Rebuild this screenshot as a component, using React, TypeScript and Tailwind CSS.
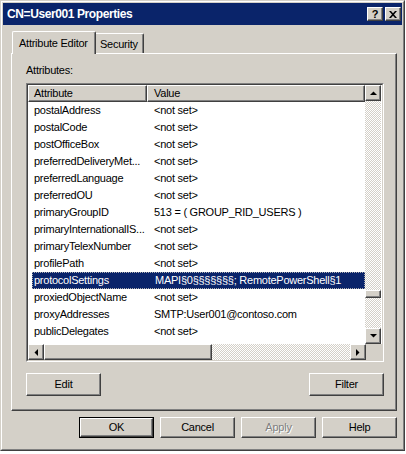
import React from "react";

const rows: [string, string][] = [
  ["postalAddress", "<not set>"],
  ["postalCode", "<not set>"],
  ["postOfficeBox", "<not set>"],
  ["preferredDeliveryMet...", "<not set>"],
  ["preferredLanguage", "<not set>"],
  ["preferredOU", "<not set>"],
  ["primaryGroupID", "513 = ( GROUP_RID_USERS )"],
  ["primaryInternationalIS...", "<not set>"],
  ["primaryTelexNumber", "<not set>"],
  ["profilePath", "<not set>"],
  ["protocolSettings", "MAPI§0§§§§§§§; RemotePowerShell§1"],
  ["proxiedObjectName", "<not set>"],
  ["proxyAddresses", "SMTP:User001@contoso.com"],
  ["publicDelegates", "<not set>"],
  ["pwdLastSet", "07/20/2011 1:39:44 W. Europe Daylight Time"],
];

const raised =
  "border border-t-white border-l-white border-r-[#404040] border-b-[#404040] shadow-[inset_-1px_-1px_#808080] bg-[#d4d0c8]";

function Arrow({ dir }: { dir: "up" | "down" | "left" | "right" }) {
  const pts = {
    up: "0,4 7,4 3.5,0.5",
    down: "0,0 7,0 3.5,3.5",
    left: "4,0 4,7 0.5,3.5",
    right: "0,0 0,7 3.5,3.5",
  }[dir];
  const vertical = dir === "up" || dir === "down";
  return (
    <svg width={vertical ? 7 : 4} height={vertical ? 4 : 7} viewBox={vertical ? "0 0 7 4" : "0 0 4 7"}>
      <polygon points={pts} fill="#000" />
    </svg>
  );
}

function Btn({ label, def, disabled }: { label: string; def?: boolean; disabled?: boolean }) {
  const inner = (
    <div className={`${raised} h-full w-full flex items-center justify-center`}>
      <span className={disabled ? "text-[#808080] [text-shadow:1px_1px_0_#fff]" : "text-black"}>{label}</span>
    </div>
  );
  if (def) {
    return <div className="w-[75px] h-[21px] border border-black">{inner}</div>;
  }
  return <div className="w-[75px] h-[21px]">{inner}</div>;
}

const dither =
  "bg-[image:repeating-conic-gradient(#d4d0c8_0%_25%,#ffffff_0%_50%)] bg-[length:2px_2px]";

export default function App() {
  return (
    <div className="w-[406px] h-[454px] bg-white font-['Liberation_Sans',Arial,sans-serif] text-[11px] tracking-[-0.25px] leading-[13px] text-black">
      <div className="w-[405px] h-[451px] border border-t-[#d4d0c8] border-l-[#d4d0c8] border-r-[#404040] border-b-[#404040]">
        <div className="h-full border border-t-white border-l-white border-r-[#808080] border-b-[#808080] bg-[#d4d0c8] p-px flex flex-col">
          {/* title bar */}
          <div className="h-[22px] bg-[#0a246a] flex items-center pl-[4px] pr-[1px]">
            <span className="text-white font-bold text-[12px] tracking-[-0.4px] flex-1">CN=User001 Properties</span>
            <div className={`${raised} w-[16px] h-[14px] flex items-center justify-center font-bold text-[11px] leading-none`}>?</div>
            <div className={`${raised} w-[16px] h-[14px] ml-[2px] flex items-center justify-center`}>
              <svg width="8" height="7" viewBox="0 0 8 7">
                <path d="M0 0h2l2 2.2L6 0h2L5 3.5 8 7H6L4 4.8 2 7H0l3-3.5z" fill="#000" />
              </svg>
            </div>
          </div>

          {/* tabs */}
          <div className="ml-[8px] mt-[6px] h-[22px] flex items-end">
            <div className="relative z-10 ml-px -mb-px h-[23px] w-[84px] bg-[#d4d0c8] border-t border-l border-t-white border-l-white border-r border-r-[#404040] shadow-[inset_-1px_0_#808080] rounded-t-[2px] flex items-start pt-[5px] pl-[6px]">
              Attribute Editor
            </div>
            <div className="h-[20px] w-[48px] border-t border-t-white border-r border-r-[#404040] shadow-[inset_-1px_0_#808080] rounded-tr-[2px] flex items-start pt-[4px] pl-[4px]">
              Security
            </div>
          </div>

          {/* panel */}
          <div className="ml-[8px] w-[386px] h-[358px] border-t border-l border-t-white border-l-white border-r border-b border-r-[#404040] border-b-[#404040] shadow-[inset_-1px_-1px_#808080] pl-[14px] pr-[12px] flex flex-col">
            <div className="mt-[10px]">Attributes:</div>
            <div className="mt-[6px] h-[279px] border border-t-[#808080] border-l-[#808080] border-r-white border-b-white">
              <div className="h-full border border-t-[#404040] border-l-[#404040] border-r-[#d4d0c8] border-b-[#d4d0c8] bg-white flex flex-col">
                <div className="h-[259px] flex">
                  <div className="w-[337px] flex flex-col">
                    <div className="h-[17px] flex">
                      <div className={`${raised} w-[119px] pl-[5px] flex items-center`}>Attribute</div>
                      <div className={`${raised} w-[218px] pl-[6px] flex items-center`}>Value</div>
                    </div>
                    <div className="h-[242px] overflow-hidden">
                      {rows.map(([a, v], i) => {
                        const sel = a === "protocolSettings";
                        return (
                          <div key={i} className="h-[17px] pl-[4px] flex">
                            <div
                              className={`flex-1 flex items-center whitespace-nowrap overflow-hidden ${
                                sel ? "bg-[#0a246a] text-white border border-dotted border-[#b0b0b0]" : ""
                              }`}
                            >
                              <div className={`w-[115px] shrink-0 ${sel ? "pl-px" : "pl-[2px]"}`}>{a}</div>
                              <div className="pl-[7px]">{v}</div>
                            </div>
                          </div>
                        );
                      })}
                    </div>
                  </div>
                  <div className="w-[16px] flex flex-col">
                    <div className={`${raised} h-[16px] flex items-center justify-center`}>
                      <Arrow dir="up" />
                    </div>
                    <div className={`flex-1 ${dither} flex flex-col`}>
                      <div className="h-[189px]" />
                      <div className={`${raised} h-[8px]`} />
                    </div>
                    <div className={`${raised} h-[16px] flex items-center justify-center`}>
                      <Arrow dir="down" />
                    </div>
                  </div>
                </div>
                <div className="h-[16px] flex">
                  <div className={`${raised} w-[16px] flex items-center justify-center`}>
                    <Arrow dir="left" />
                  </div>
                  <div className={`${raised} w-[168px]`} />
                  <div className={`flex-1 ${dither}`} />
                  <div className={`${raised} w-[16px] flex items-center justify-center`}>
                    <Arrow dir="right" />
                  </div>
                  <div className="w-[16px] bg-[#d4d0c8]" />
                </div>
              </div>
            </div>
            <div className="mt-[11px] flex justify-between">
              <div className="w-[75px] h-[23px]">
                <div className={`${raised} h-full flex items-center justify-center`}>Edit</div>
              </div>
              <div className="w-[75px] h-[23px]">
                <div className={`${raised} h-full flex items-center justify-center`}>Filter</div>
              </div>
            </div>
          </div>

          {/* dialog buttons */}
          <div className="ml-[8px] w-[386px] mt-[6px] flex justify-end gap-[6px]">
            <Btn label="OK" def />
            <Btn label="Cancel" />
            <Btn label="Apply" disabled />
            <Btn label="Help" />
          </div>
        </div>
      </div>
    </div>
  );
}
